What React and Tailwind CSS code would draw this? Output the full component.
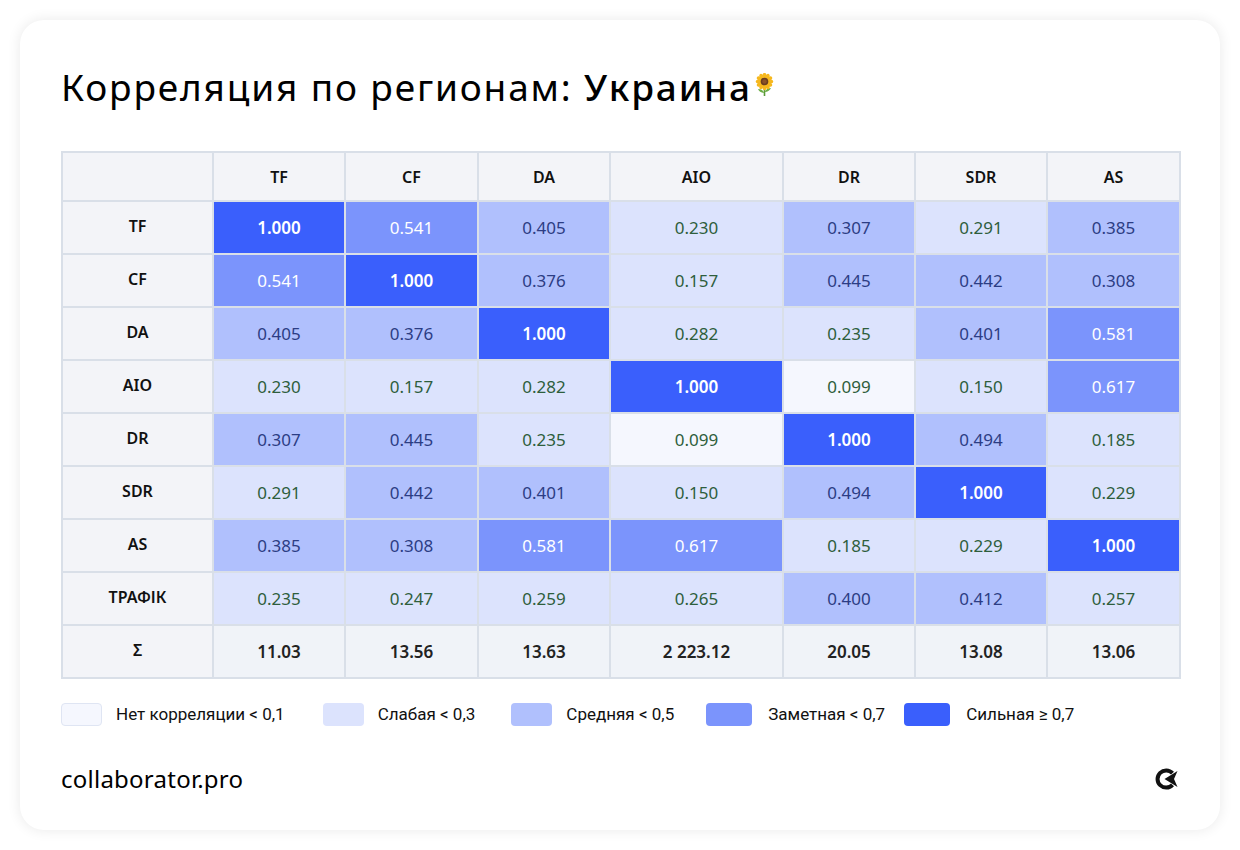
import React from "react";

const cols = ["TF", "CF", "DA", "AIO", "DR", "SDR", "AS"];

const rows = [
  ["TF", [1, 0.541, 0.405, 0.23, 0.307, 0.291, 0.385]],
  ["CF", [0.541, 1, 0.376, 0.157, 0.445, 0.442, 0.308]],
  ["DA", [0.405, 0.376, 1, 0.282, 0.235, 0.401, 0.581]],
  ["AIO", [0.23, 0.157, 0.282, 1, 0.099, 0.15, 0.617]],
  ["DR", [0.307, 0.445, 0.235, 0.099, 1, 0.494, 0.185]],
  ["SDR", [0.291, 0.442, 0.401, 0.15, 0.494, 1, 0.229]],
  ["AS", [0.385, 0.308, 0.581, 0.617, 0.185, 0.229, 1]],
  ["ТРАФІК", [0.235, 0.247, 0.259, 0.265, 0.4, 0.412, 0.257]],
];

const sums = ["11.03", "13.56", "13.63", "2 223.12", "20.05", "13.08", "13.06"];

const legend = [
  ["w-[41px] bg-[#f5f7fe] border border-[#dfe5f3]", "Нет корреляции < 0,1", "gap-[14px]"],
  ["w-[41px] bg-[#dce3fd]", "Слабая < 0,3", "gap-[14px] ml-[38px]"],
  ["w-[41px] bg-[#b0c0fd]", "Средняя < 0,5", "gap-[14px] ml-[36px]"],
  ["w-[46px] bg-[#7b94fc]", "Заметная < 0,7", "gap-[16px] ml-[32px]"],
  ["w-[46px] bg-[#3a5ffc]", "Сильная ≥ 0,7", "gap-[16px] ml-[19px]"],
];

// full class strings per level
const cellClass = (v) => {
  if (v >= 0.7) return "bg-[#3a5ffc] text-white font-semibold";
  if (v >= 0.5) return "bg-[#7b94fc] text-white";
  if (v >= 0.3) return "bg-[#b0c0fd] text-[#2c3d84]";
  if (v >= 0.1) return "bg-[#dce3fd] text-[#2e5e3c]";
  return "bg-[#f5f7fe] text-[#2e5e3c]";
};

const widths = ["w-[151px]", "w-[132px]", "w-[133px]", "w-[132px]", "w-[173px]", "w-[132px]", "w-[132px]", "w-[133px]"];

const Sunflower = () => (
  <svg width="21" height="24" viewBox="0 0 21 24" className="ml-[2px] mt-[8px]">
    <path d="M10.5 13 L10.5 23" stroke="#5a9a3a" strokeWidth="1.6" />
    <path d="M10.5 20 C7 20 5 18 4 16 C7 16 9 17.5 10.5 20 Z" fill="#6cae45" />
    <path d="M10.5 19 C14 19 16 17 17 15 C14 15 12 16.5 10.5 19 Z" fill="#6cae45" />
    {[0, 30, 60, 90, 120, 150, 180, 210, 240, 270, 300, 330].map((a) => (
      <ellipse key={a} cx="10.5" cy="3.2" rx="2" ry="3.4" fill="#f6b81e" transform={`rotate(${a} 10.5 8.5)`} />
    ))}
    <circle cx="10.5" cy="8.5" r="3.8" fill="#6b3d1f" />
    <circle cx="10.5" cy="8.5" r="2.2" fill="#8a5128" />
  </svg>
);

const Logo = () => (
  <svg width="26" height="24" viewBox="0 0 26 24">
    <path d="M19.5 6.2 A8.6 8.6 0 1 0 19.5 17.8" fill="none" stroke="#111" strokeWidth="4" />
    <path d="M24.5 4 L11.5 12 L24.5 20 L21 12 Z" fill="#111" />
  </svg>
);

export default function App() {
  return (
    <div className="min-h-screen w-full bg-white p-[20px] font-['Noto_Sans',sans-serif]">
      <div className="relative w-[1200px] h-[810px] rounded-[24px] bg-white shadow-[0_0_14px_rgba(0,0,0,0.09)] overflow-hidden">
        <div className="relative flex flex-col px-[41px] pt-[45px]">
          <div className="flex items-start">
            <h1 className="text-[37px] leading-[44px] tracking-[0.05em] text-black font-normal">
              Корреляция по регионам: <span className="font-medium">Украина</span>
            </h1>
            <Sunflower />
          </div>

          <table className="mt-[42px] border-collapse table-fixed w-[1118px] text-center">
            <thead>
              <tr className="h-[49px] bg-[#f3f4f8]">
                <th className={`${widths[0]} border-2 border-[#d9dfe8]`}></th>
                {cols.map((c, i) => (
                  <th key={c} className={`${widths[i + 1]} border-2 border-[#d9dfe8] text-[16px] font-semibold text-[#111]`}>
                    {c}
                  </th>
                ))}
              </tr>
            </thead>
            <tbody>
              {rows.map(([label, vals]) => (
                <tr key={label} className="h-[53px]">
                  <td className="border-2 border-[#d9dfe8] bg-[#f3f4f8] text-[16px] font-semibold text-[#111] pb-[4px]">
                    {label}
                  </td>
                  {vals.map((v, i) => (
                    <td key={i} className={`border-2 border-[#d9dfe8] text-[17px] ${cellClass(v)}`}>
                      {v.toFixed(3)}
                    </td>
                  ))}
                </tr>
              ))}
              <tr className="h-[53px] bg-[#f0f3f8]">
                <td className="border-2 border-[#d9dfe8] bg-[#f3f4f8] text-[16px] font-semibold text-[#111] pb-[4px]">Σ</td>
                {sums.map((s, i) => (
                  <td key={i} className="border-2 border-[#d9dfe8] text-[17px] font-semibold text-[#222]">
                    {s}
                  </td>
                ))}
              </tr>
            </tbody>
          </table>

          <div className="mt-[23px] flex items-center font-['Roboto',sans-serif] text-[17px] text-[#111]">
            {legend.map(([cls, label, wrap]) => (
              <div key={label} className={`flex items-center ${wrap}`}>
                <span className={`h-[23px] rounded-[4px] ${cls}`}></span>
                <span>{label}</span>
              </div>
            ))}
          </div>

          <div className="mt-[33px] flex items-center justify-between">
            <span className="text-[24px] text-black tracking-[0.01em]">collaborator.pro</span>
            <Logo />
          </div>
        </div>
      </div>
    </div>
  );
}
